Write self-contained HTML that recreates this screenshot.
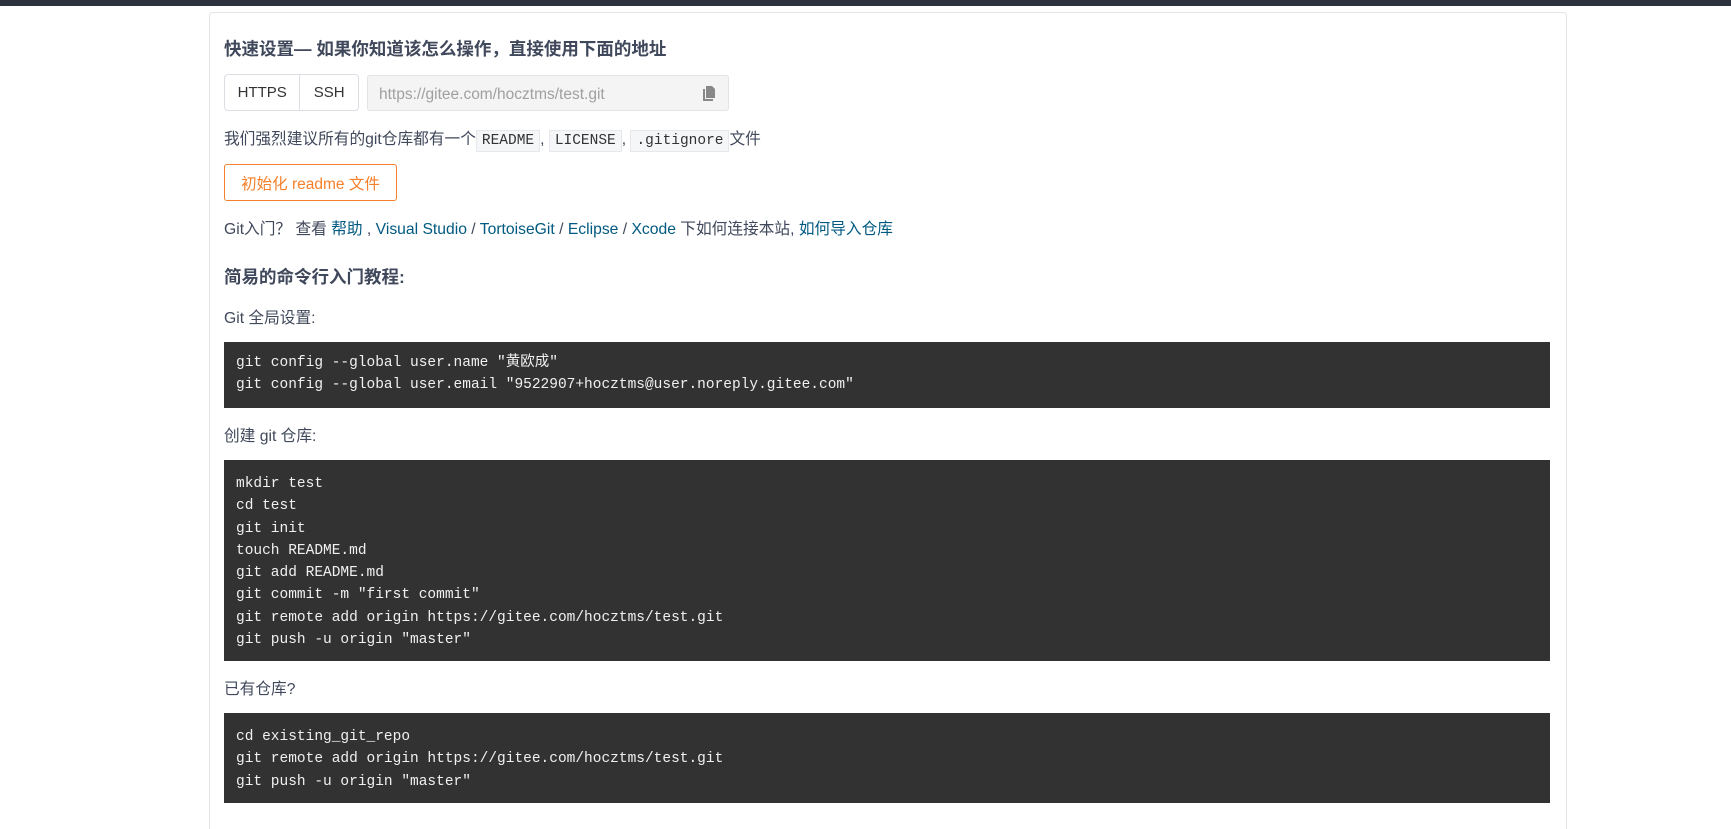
<!DOCTYPE html>
<html style="overflow:hidden;height:829px"><head><meta charset="utf-8"><style>
*{box-sizing:border-box;margin:0;padding:0}
body{width:1731px;height:829px;overflow:hidden;position:relative;background:#fff;font-family:"Liberation Sans","Noto Sans CJK SC",sans-serif;font-size:15.7px;color:#40485b}
.top{position:absolute;left:0;top:0;width:1731px;height:6px;background:#2e323e}
.card{position:absolute;left:209px;top:12px;width:1358px;height:817px;border:1px solid #e3e5e9;border-bottom:none;border-radius:4px 4px 0 0}
.a{position:absolute;left:224px;white-space:nowrap}
h3{font-size:17.5px;font-weight:bold;color:#40485b}
.btns{position:absolute;left:224px;top:74px;height:37px;width:135px;border:1px solid #dcdee3;border-radius:4px;display:flex}
.btns div{display:flex;align-items:center;justify-content:center;font-size:15px;color:#333}
.inp{position:absolute;left:367px;top:75px;width:362px;height:36px;background:#f4f4f5;border:1px solid #e3e4e8;border-radius:3px;color:#a0a0a0;padding:10px 11px;font-size:15.5px}
code.k{font-family:"Liberation Mono",monospace;font-size:14.5px;background:#f5f6f8;border:1px solid #e6e8eb;padding:2px 5px;color:#333}
.ib{position:absolute;left:224px;top:164px;width:173px;height:37px;border:1px solid #f6802a;border-radius:3px;color:#f6802a;display:flex;align-items:center;justify-content:center;font-size:15.5px}
a{color:#005980;text-decoration:none}
.code{position:absolute;left:224px;width:1326px;background:#323232;color:#f0f0f0;font-family:"Liberation Mono","Noto Sans CJK SC",monospace;font-size:14.5px;line-height:22.3px;padding:10px 12px;white-space:pre}
</style></head><body>
<div class="top"></div>
<div class="card"></div>
<h3 class="a" style="top:36px">快速设置— 如果你知道该怎么操作，直接使用下面的地址</h3>
<div class="btns"><div style="width:76px;border-right:1px solid #dcdee3">HTTPS</div><div style="width:58px">SSH</div></div>
<div class="inp">https://gitee.com/hocztms/test.git
<svg style="position:absolute;right:12px;top:10px" width="14" height="16" viewBox="0 0 14 16"><path d="M4 0h6l3 3v9H4z" fill="#888"/><path d="M1 3h2v10h8v2H1z" fill="#888"/></svg></div>
<div class="a" style="top:126px">我们强烈建议所有的git仓库都有一个<code class="k">README</code>, <code class="k">LICENSE</code>, <code class="k">.gitignore</code>文件</div>
<div class="ib">初始化 readme 文件</div>
<div class="a" style="top:216px">Git入门？ 查看 <a>帮助</a> , <a>Visual Studio</a> / <a>TortoiseGit</a> / <a>Eclipse</a> / <a>Xcode</a> 下如何连接本站, <a>如何导入仓库</a></div>
<h3 class="a" style="top:264px">简易的命令行入门教程:</h3>
<div class="a" style="top:305px">Git 全局设置:</div>
<div class="code" style="top:342px;height:66px">git config --global user.name "黄欧成"
git config --global user.email "9522907+hocztms@user.noreply.gitee.com"</div>
<div class="a" style="top:423px">创建 git 仓库:</div>
<div class="code" style="top:460px;height:201px;padding-top:13px">mkdir test
cd test
git init
touch README.md
git add README.md
git commit -m "first commit"
git remote add origin https://gitee.com/hocztms/test.git
git push -u origin "master"</div>
<div class="a" style="top:676px">已有仓库?</div>
<div class="code" style="top:713px;height:90px;padding-top:13px">cd existing_git_repo
git remote add origin https://gitee.com/hocztms/test.git
git push -u origin "master"</div>
</body></html>
